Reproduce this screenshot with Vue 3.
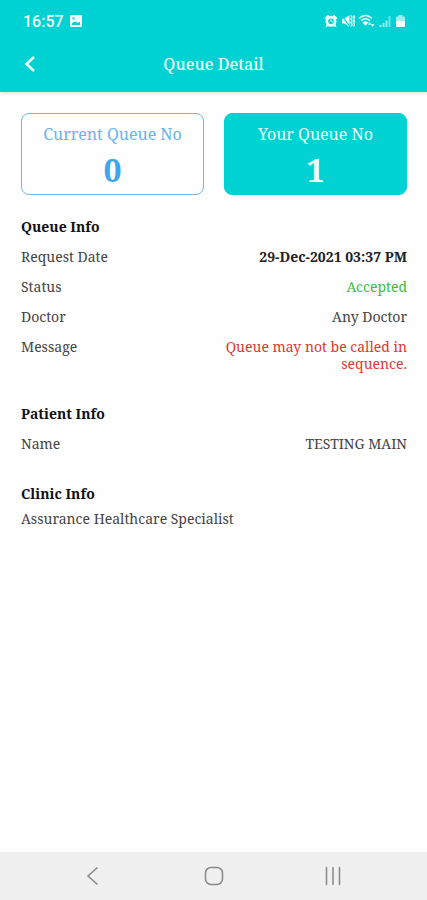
<template>
  <div class="queue-app">
    <header class="header">
      <div class="status-bar">
        <div class="status-left">
          <span class="clock">16:57</span>
          <svg class="photo-icon" viewBox="0 0 14 14">
            <path
              fill-rule="evenodd"
              d="M2 1h10a1 1 0 0 1 1 1v10a1 1 0 0 1-1 1H2a1 1 0 0 1-1-1V2a1 1 0 0 1 1-1zM3 9V11h8V7.500L9 9 6.500 7.500zM3.500 3.500v2h2v-2z"
            />
          </svg>
        </div>
        <div class="status-right">
          <svg viewBox="0 0 14 14">
            <path d="M.5 4 4 .8l1.500 1.500L2 5.500zM13.500 4 10 .8 8.500 2.300 12 5.500z" />
            <path
              fill-rule="evenodd"
              d="M7 1.800a5.500 5.500 0 1 1 0 11A5.500 5.500 0 0 1 7 1.800zM7 4.500a2.800 2.800 0 1 0 0 5.600 2.800 2.800 0 0 0 0-5.600z"
            />
            <path d="M6.500 5.200h1v1.700l1.300.8-.5.8-1.800-1.100z" />
            <path d="M1.500 13.200 2.500 10l2.500 2zM12.500 13.200l-1-3.200L9 12z" />
          </svg>
          <svg viewBox="0 0 14 14">
            <path d="M1 4.500h2.500L8.500 1v12L3.500 9.500H1z" />
            <path class="cut" d="M.5 1.500 9 12.500" />
            <path class="line" d="M10 1.500l1 1.800-1 1.800 1 1.800-1 1.800 1 1.800-1 1.800M12.500 1.500l1 1.800-1 1.800 1 1.800-1 1.800 1 1.800-1 1.800" />
          </svg>
          <svg class="wifi-icon" viewBox="0 0 17 14">
            <path class="line" d="M1 4.200c4-3.400 9-3.400 13 0M3 6.600c2.700-2.300 6.300-2.300 9 0" />
            <path d="M4.500 8.200c1.800-1.300 4.200-1.300 6 0l-3 3.800z" />
            <path d="M9.800 10.700 11.700 8l1.900 2.700zM12.800 10.300h3.800L14.700 13z" />
          </svg>
          <svg viewBox="0 0 14 14">
            <path class="soft" d="M1.500 11h2v2h-2zM4.500 9h2v4h-2zM7.500 6.500h2V13h-2z" />
            <path class="faint" d="M10.500 2h2v11h-2z" />
          </svg>
          <svg class="battery-icon" viewBox="0 0 11 14">
            <path class="soft" d="M3.500 1h4v1.500H9a1 1 0 0 1 1 1V7H1V3.500a1 1 0 0 1 1-1h1.500z" />
            <path d="M1 7h9v5a1 1 0 0 1-1 1H2a1 1 0 0 1-1-1z" />
          </svg>
        </div>
      </div>
      <div class="title-bar">
        <button type="button" class="back" aria-label="Back">
          <svg viewBox="0 0 18 18">
            <path d="M13 2 5.500 9 13 16" />
          </svg>
        </button>
        <h1 class="title">Queue Detail</h1>
      </div>
    </header>

    <main class="content">
      <div class="cards">
        <div
          v-for="card in cards"
          :key="card.label"
          class="card"
          :class="{ active: card.active }"
        >
          <p class="card-label">{{ card.label }}</p>
          <p class="card-number">{{ card.number }}</p>
        </div>
      </div>

      <section class="info">
        <h2 class="info-title">Queue Info</h2>
        <dl class="rows">
          <div v-for="row in queueInfo" :key="row.label" class="row">
            <dt>{{ row.label }}</dt>
            <dd :class="row.type">{{ row.value }}</dd>
          </div>
        </dl>
      </section>

      <section class="info">
        <h2 class="info-title">Patient Info</h2>
        <dl class="rows">
          <div class="row">
            <dt>Name</dt>
            <dd>{{ patientName }}</dd>
          </div>
        </dl>
      </section>

      <section class="info">
        <h2 class="info-title">Clinic Info</h2>
        <p class="clinic">{{ clinicName }}</p>
      </section>
    </main>

    <nav class="nav-bar">
      <button type="button" class="nav-btn" aria-label="Go back">
        <svg viewBox="0 0 20 20">
          <path d="M14.500 1.500 5 10l9.500 8.500" />
        </svg>
      </button>
      <button type="button" class="nav-btn" aria-label="Home">
        <svg viewBox="0 0 20 20">
          <rect x="1.500" y="1.500" width="17" height="17" rx="5.500" />
        </svg>
      </button>
      <button type="button" class="nav-btn" aria-label="Recent apps">
        <svg viewBox="0 0 20 20">
          <path d="M2.500 1v18M9 1v18M15.500 1v18" />
        </svg>
      </button>
    </nav>
  </div>
</template>

<script setup>
import { ref } from "vue";

const cards = ref([
  { label: "Current Queue No", number: 0, active: false },
  { label: "Your Queue No", number: 1, active: true },
]);

const queueInfo = ref([
  { label: "Request Date", value: "29-Dec-2021 03:37 PM", type: "date" },
  { label: "Status", value: "Accepted", type: "accepted" },
  { label: "Doctor", value: "Any Doctor", type: "" },
  {
    label: "Message",
    value: "Queue may not be called in sequence.",
    type: "warning",
  },
]);

const patientName = ref("TESTING MAIN");
const clinicName = ref("Assurance Healthcare Specialist");
</script>

<style>
body {
  margin: 0;
}
</style>

<style scoped>
* {
  padding: 0;
  margin: 0;
  box-sizing: border-box;
}
.queue-app {
  display: flex;
  flex-direction: column;
  min-height: 100vh;
  background-color: #fefefe;
  color: #444;
  font-family: "Noto Serif", "DejaVu Serif Condensed", "DejaVu Serif", serif;
  font-size: 14px;
  line-height: 17px;
}
button {
  border: none;
  background: none;
  cursor: pointer;
}
svg {
  display: block;
}

/* header */
.header {
  background-color: #00d2d3;
  color: #effdfd;
  box-shadow: 0 1px 4px rgba(0, 0, 0, 0.15);
}
.status-bar {
  display: flex;
  justify-content: space-between;
  align-items: center;
  height: 40px;
  padding: 2px 21px 0 23px;
}
.status-left,
.status-right {
  display: flex;
  align-items: center;
}
.status-left {
  gap: 5px;
}
.status-right {
  gap: 3px;
}
.status-bar svg {
  width: 14px;
  height: 14px;
  fill: #effdfd;
}
.status-bar .wifi-icon {
  width: 17px;
}
.status-bar .battery-icon {
  width: 11px;
}
.status-bar .line {
  fill: none;
  stroke: #effdfd;
  stroke-width: 1.4;
}
.status-bar .cut {
  stroke: #00d2d3;
  stroke-width: 1.2;
}
.status-bar .soft {
  opacity: 0.65;
}
.status-bar .faint {
  opacity: 0.45;
}
.clock {
  font-family: Roboto, sans-serif;
  font-size: 16px;
  font-weight: 500;
}
.title-bar {
  display: grid;
  grid-template-columns: 60px 1fr 60px;
  align-items: center;
  height: 52px;
  padding-bottom: 4px;
}
.back {
  height: 44px;
  padding-left: 21px;
}
.back svg {
  width: 18px;
  height: 18px;
  fill: none;
  stroke: #effdfd;
  stroke-width: 2.6;
}
.title {
  font-size: 16px;
  font-weight: 500;
  line-height: 22px;
  text-align: center;
}

/* content */
.content {
  flex: 1;
  padding: 21px 20px 21px 21px;
}
.cards {
  display: grid;
  grid-template-columns: 1fr 1fr;
  gap: 20px;
}
.card {
  padding: 9px 8px 4px;
  border: 1px solid #6db9ee;
  border-radius: 8px;
  color: #68b5ec;
  text-align: center;
}
.card.active {
  border-color: #00d2d3;
  background-color: #00d2d3;
  color: #effdfd;
}
.card-label {
  font-size: 16px;
  line-height: 22px;
}
.card-number {
  margin-top: 5px;
  color: #3fa5ee;
  font-size: 32px;
  font-weight: bold;
  line-height: 40px;
}
.active .card-number {
  color: #effdfd;
}
.info {
  margin-top: 33px;
}
.cards + .info {
  margin-top: 23px;
}
.info-title {
  color: #111;
  font-size: 14px;
  font-weight: bold;
}
.row {
  display: flex;
  justify-content: space-between;
  margin-top: 13px;
}
.row dd {
  max-width: 52%;
  text-align: right;
}
.row .date {
  color: #222;
  font-weight: bold;
}
.row .accepted {
  color: #3dbb3d;
}
.row .warning {
  color: #e0392f;
}
.clinic {
  margin-top: 8px;
}

/* phone navigation */
.nav-bar {
  display: flex;
  justify-content: space-between;
  align-items: center;
  height: 48px;
  padding: 0 71px;
  background-color: #f0f0f0;
}
.nav-btn {
  padding: 12px;
}
.nav-btn svg {
  width: 20px;
  height: 20px;
  fill: none;
  stroke: #888;
  stroke-width: 1.5;
}
</style>
